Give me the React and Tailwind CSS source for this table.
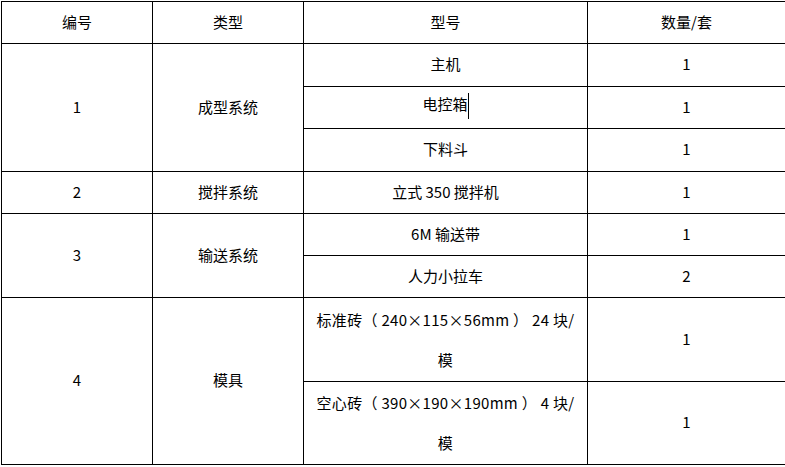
const FONT = { fontFamily: '"Noto Sans CJK SC", "Liberation Sans", sans-serif' };

function Cell({ children, className = 'pb-[3px]', ...rest }) {
  return (
    <td className={`border border-black p-0 text-center align-middle ${className}`} {...rest}>
      {children}
    </td>
  );
}

export default function App() {
  return (
    <div className="w-[785px] h-[467px] bg-white pl-px pt-px" style={FONT}>
      <table className="border-collapse table-fixed w-[784px] text-[15px] text-black leading-none">
        <colgroup>
          <col className="w-[151px]" />
          <col className="w-[151px]" />
          <col className="w-[284px]" />
          <col className="w-[198px]" />
        </colgroup>
        <tbody>
          <tr className="h-[42px]">
            <Cell>编号</Cell>
            <Cell>类型</Cell>
            <Cell>型号</Cell>
            <Cell>数量/套</Cell>
          </tr>
          <tr className="h-[43px]">
            <Cell rowSpan={3}>1</Cell>
            <Cell rowSpan={3}>成型系统</Cell>
            <Cell>主机</Cell>
            <Cell>1</Cell>
          </tr>
          <tr className="h-[42px]">
            <Cell>
              电控箱
              <span className="inline-block w-px h-[26px] bg-black align-middle" />
            </Cell>
            <Cell>1</Cell>
          </tr>
          <tr className="h-[43px]">
            <Cell>下料斗</Cell>
            <Cell>1</Cell>
          </tr>
          <tr className="h-[42px]">
            <Cell>2</Cell>
            <Cell>搅拌系统</Cell>
            <Cell>立式 350 搅拌机</Cell>
            <Cell>1</Cell>
          </tr>
          <tr className="h-[42px]">
            <Cell rowSpan={2}>3</Cell>
            <Cell rowSpan={2}>输送系统</Cell>
            <Cell>6M 输送带</Cell>
            <Cell>1</Cell>
          </tr>
          <tr className="h-[42px]">
            <Cell>人力小拉车</Cell>
            <Cell>2</Cell>
          </tr>
          <tr className="h-[84px]">
            <Cell rowSpan={2}>4</Cell>
            <Cell rowSpan={2}>模具</Cell>
            <Cell className="pb-0 leading-[40px] tracking-[0.3px]">
              <div>标准砖（ 240×115×56mm ） 24 块/</div>
              <div>模</div>
            </Cell>
            <Cell>1</Cell>
          </tr>
          <tr className="h-[83px]">
            <Cell className="pb-0 leading-[40px] tracking-[0.3px]">
              <div>空心砖（ 390×190×190mm ） 4 块/</div>
              <div>模</div>
            </Cell>
            <Cell>1</Cell>
          </tr>
        </tbody>
      </table>
    </div>
  );
}
